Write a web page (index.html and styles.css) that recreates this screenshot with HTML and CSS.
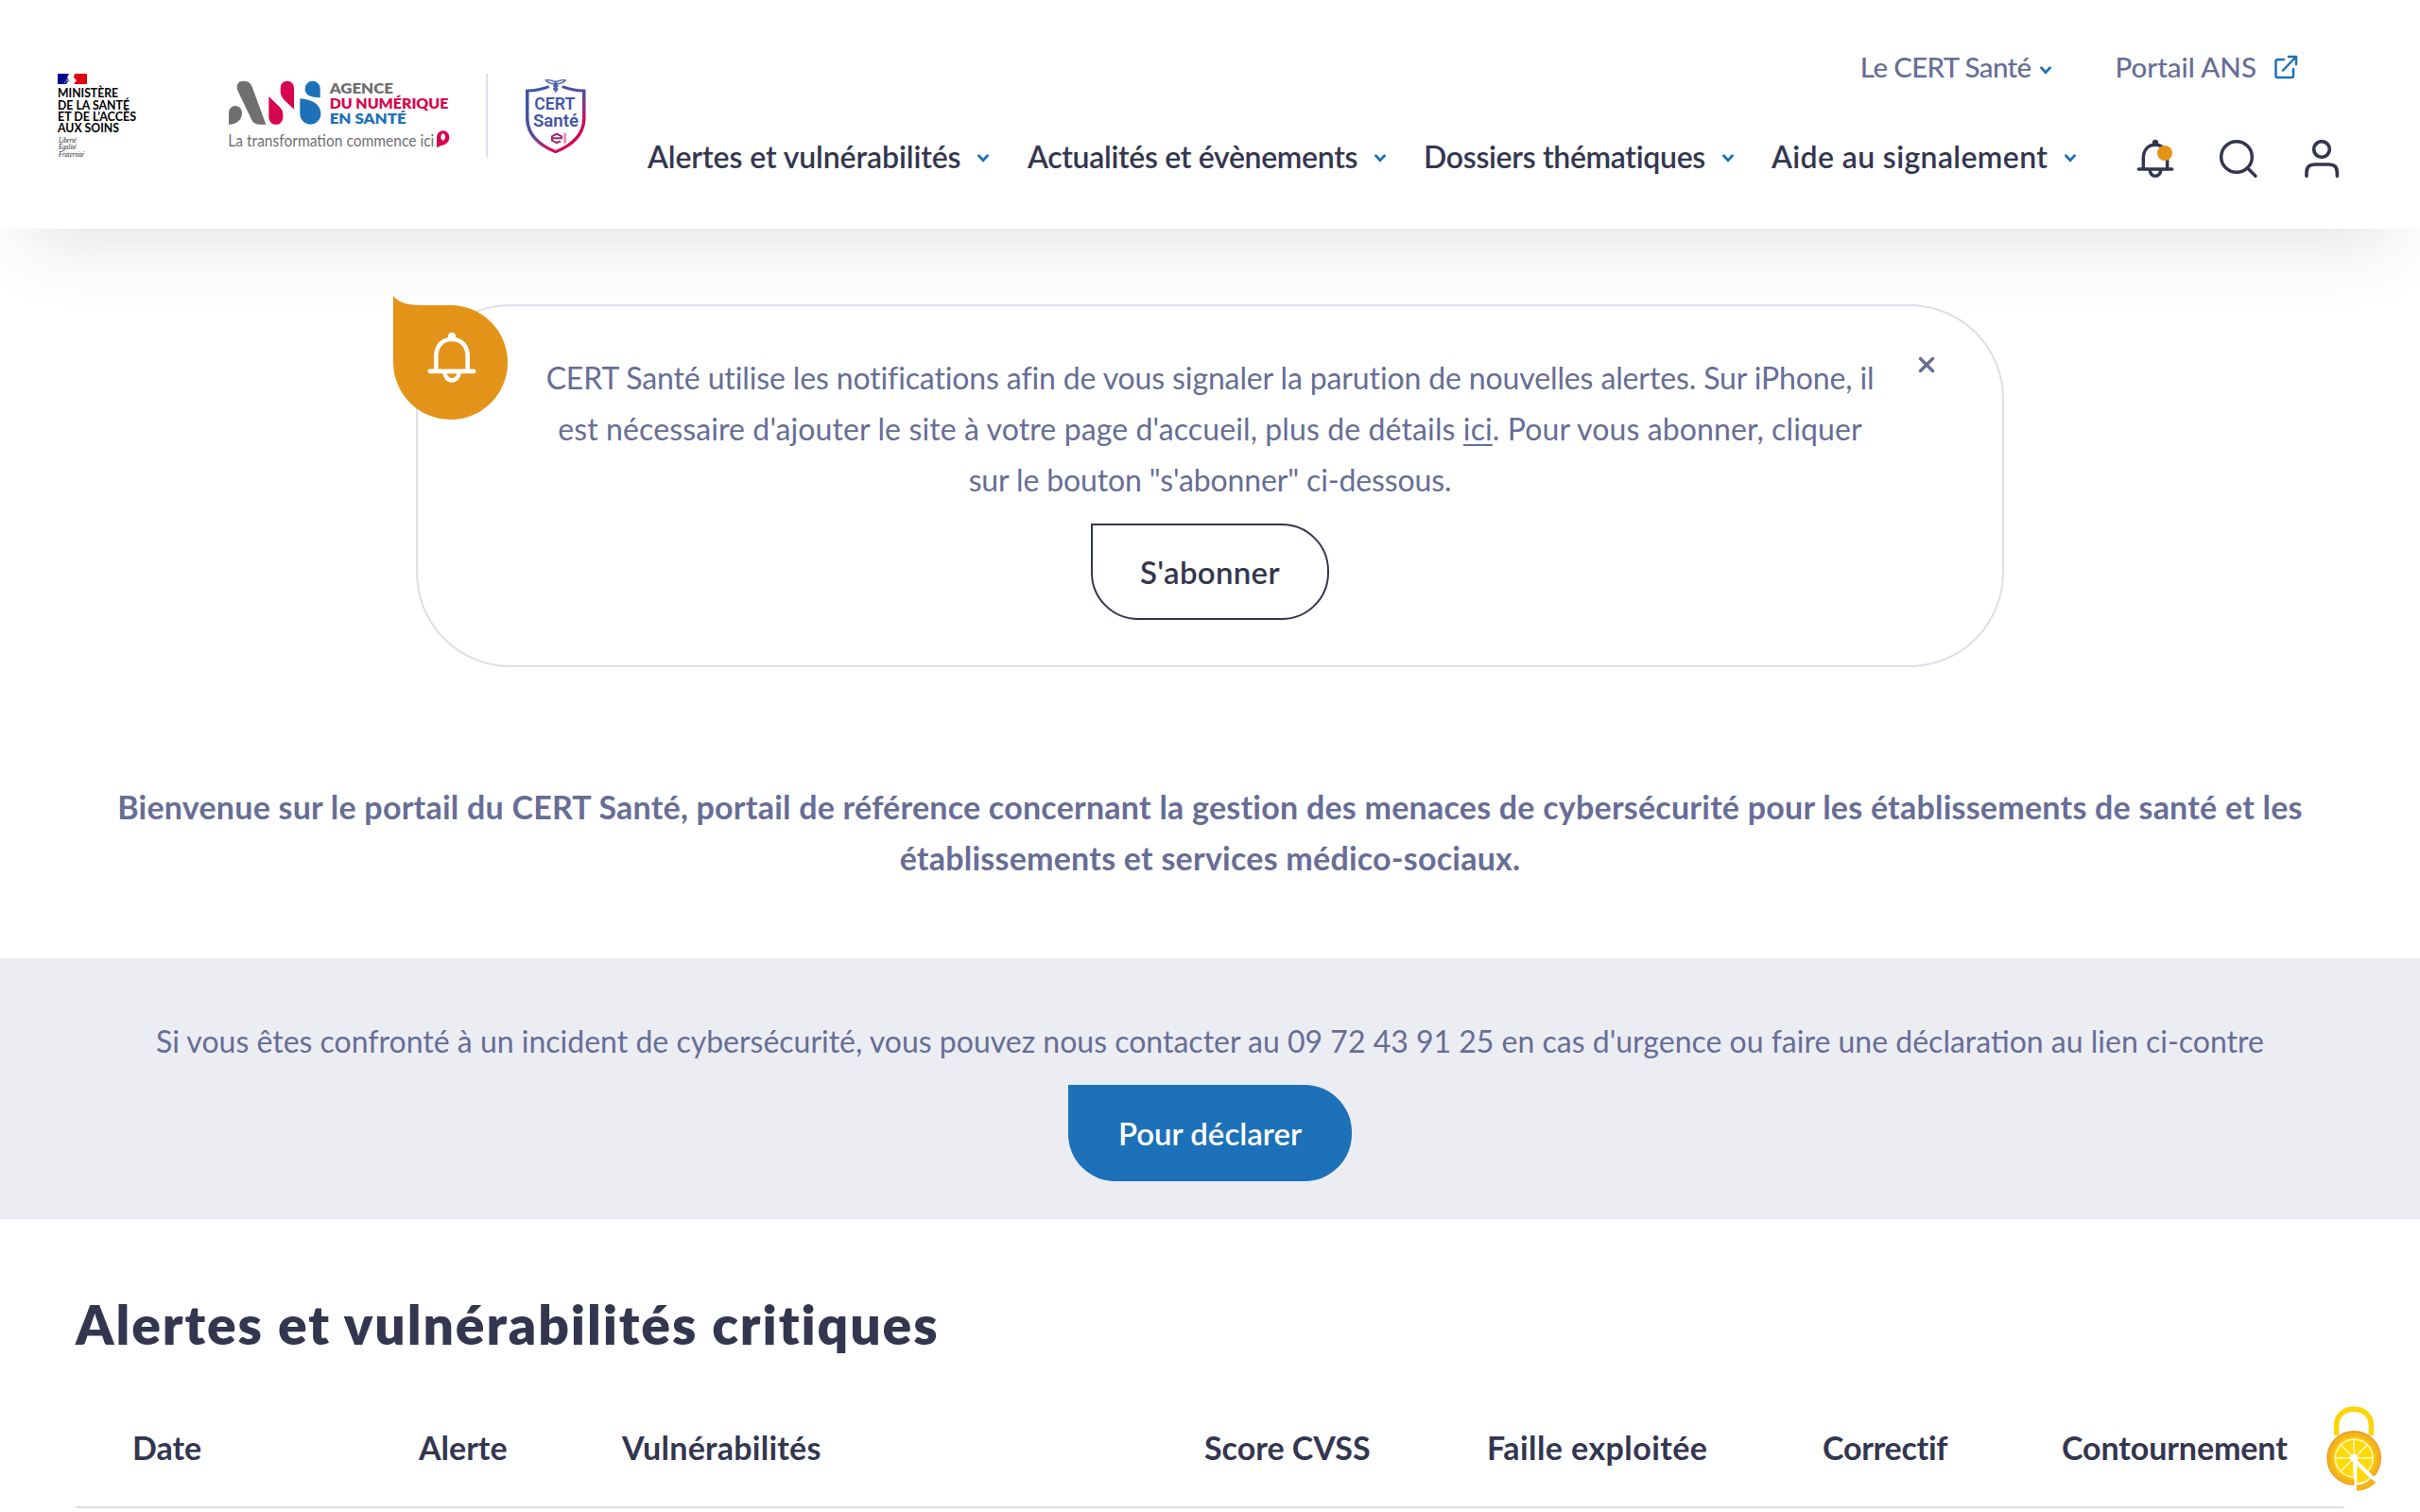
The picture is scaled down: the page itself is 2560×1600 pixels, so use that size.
FILE: index.html
```html
<!DOCTYPE html>
<html lang="fr">
<head>
<meta charset="utf-8">
<title>CERT Santé</title>
<link rel="stylesheet" href="styles.css">
</head>
<body>
<svg class="defs" aria-hidden="true">
  <symbol id="bell" viewBox="54 30 132 132">
    <g fill="none" stroke="currentColor" stroke-width="10.5" stroke-linecap="round" stroke-linejoin="round">
      <path d="M67 132H173M82 132V97C82 71 97 55 120 55S158 71 158 97V132M103 135A17 19 0 0 0 137 135"/>
    </g>
    <circle cx="120" cy="48" r="9.5" fill="currentColor"/>
  </symbol>
  <symbol id="chevron" viewBox="0 0 12 9">
    <path d="M1.5 1.8L6 6.6L10.5 1.8" fill="none" stroke="currentColor" stroke-width="2.8" stroke-linecap="round"/>
  </symbol>
</svg>

<header class="header">
  <div class="logos">
    <svg class="logo-ministry" viewBox="0 0 90 94">
      <path d="M1 2H13L11 6L13 9L10 13H1Z" fill="#000091"/>
      <path d="M19 2H32V13H18L21 9L18 6Z" fill="#e1000f"/>
      <path d="M8 12q3-4 5-3M10 8l4 2" fill="none" stroke="#aab" stroke-width="1"/>
      <g class="ministry-name">
        <text x="1" y="27" textLength="64" lengthAdjust="spacingAndGlyphs">MINISTÈRE</text>
        <text x="1" y="39.5" textLength="76" lengthAdjust="spacingAndGlyphs">DE LA SANTÉ</text>
        <text x="1" y="51.7" textLength="83" lengthAdjust="spacingAndGlyphs">ET DE L’ACCÈS</text>
        <text x="1" y="64" textLength="65" lengthAdjust="spacingAndGlyphs">AUX SOINS</text>
      </g>
      <g class="ministry-motto">
        <text x="2" y="74.5" textLength="19" lengthAdjust="spacingAndGlyphs">Liberté</text>
        <text x="2" y="82.3" textLength="19" lengthAdjust="spacingAndGlyphs">Égalité</text>
        <text x="2" y="90" textLength="27" lengthAdjust="spacingAndGlyphs">Fraternité</text>
      </g>
    </svg>
    <svg class="logo-ans" viewBox="30 40 720 240">
      <g fill="#706f6f">
        <path d="M36 186V148A21 21 0 0 1 78 148C78 172 62 186 36 186Z"/>
        <path d="M62 70Q62 48 85 48Q103 48 110 66L154 186H132Q115 186 108 170L66 82Q62 75 62 70Z"/>
      </g>
      <g fill="#d9044f">
        <path d="M163 97L199 132Q208 141 208 152V164A22.500 22.500 0 0 1 163 164Z"/>
        <path d="M243 138L212 108Q200 96 200 82V70A21.500 22 0 0 1 243 70Z"/>
      </g>
      <g fill="#1d71b8">
        <path d="M326 101C296 100 278 94 278 73A24 25 0 0 1 326 73Z"/>
        <path d="M262 104C300 106 328 122 328 152A33 34 0 0 1 262 152Z"/>
      </g>
      <g class="ans-name">
        <text x="356" y="88" textLength="202" lengthAdjust="spacingAndGlyphs" fill="#706f6f">AGENCE</text>
        <text x="356" y="136.500" textLength="377" lengthAdjust="spacingAndGlyphs" fill="#d9044f">DU NUMÉRIQUE</text>
        <text x="356" y="185" textLength="243" lengthAdjust="spacingAndGlyphs" fill="#1d71b8">EN SANTÉ</text>
      </g>
      <text class="ans-tagline" x="34" y="256" textLength="654" lengthAdjust="spacingAndGlyphs">La transformation commence ici</text>
      <path fill="#d9044f" fill-rule="evenodd" d="M696 260V226A20 20 0 0 1 736 226C736 244 724 250 708 254ZM716 215A7 11 0 1 0 716.100 215Z"/>
    </svg>
    <span class="logo-divider"></span>
    <svg class="logo-cert" viewBox="30 20 180 245" preserveAspectRatio="none">
      <defs>
        <linearGradient id="cert" gradientUnits="userSpaceOnUse" x1="60" y1="80" x2="180" y2="200">
          <stop offset="0" stop-color="#3b56a8"/>
          <stop offset=".5" stop-color="#5a4a98"/>
          <stop offset=".8" stop-color="#c31562"/>
          <stop offset="1" stop-color="#d9044f"/>
        </linearGradient>
      </defs>
      <path d="M100 50Q75 61 44 63V150Q47 214 117 247Q187 214 190 150V63Q159 61 134 50" fill="none" stroke="url(#cert)" stroke-width="8.500"/>
      <path d="M117 32V68M117 38Q106 28 92 31Q98 41 115 42M117 38Q128 28 142 31Q136 41 119 42M117 44q-10 5 0 9t0 10M117 44q10 5 0 9t0 10" fill="none" stroke="#4a5fa8" stroke-width="4"/>
      <g class="cert-name">
        <text x="62" y="121" textLength="105" lengthAdjust="spacingAndGlyphs">CERT</text>
        <text x="59" y="171" textLength="117" lengthAdjust="spacingAndGlyphs">Santé</text>
      </g>
      <path d="M109 206H132V200L120 193L108 200V213L120 220L130 215" fill="none" stroke="#a02a70" stroke-width="5.500"/>
      <path d="M141 190V221" stroke="#e391b4" stroke-width="7"/>
    </svg>
  </div>

  <div class="menus">
    <nav class="top-nav">
      <a class="top-link top-cert"><span>Le CERT Santé</span><svg class="chevron"><use href="#chevron"/></svg></a>
      <a class="top-link top-portal"><span>Portail ANS</span>
        <svg class="external" viewBox="0 0 26 26"><path d="M11 5H4.500Q2.500 5 2.500 7V22Q2.500 24 4.500 24H19Q21 24 21 22V15M10 16.500L23 3M16 2H24V10" fill="none" stroke="currentColor" stroke-width="2.500" stroke-linecap="round" stroke-linejoin="round"/></svg>
      </a>
    </nav>
    <nav class="main-nav">
      <a class="main-link nav-alerts"><span>Alertes et vulnérabilités</span><svg class="chevron"><use href="#chevron"/></svg></a>
      <a class="main-link nav-news"><span>Actualités et évènements</span><svg class="chevron"><use href="#chevron"/></svg></a>
      <a class="main-link nav-files"><span>Dossiers thématiques</span><svg class="chevron"><use href="#chevron"/></svg></a>
      <a class="main-link nav-help"><span>Aide au signalement</span><svg class="chevron"><use href="#chevron"/></svg></a>
      <div class="tools">
        <span class="tool"><svg class="tool-icon"><use href="#bell"/></svg><span class="dot"></span></span>
        <svg class="tool-icon" viewBox="318 30 132 132"><g fill="none" stroke="currentColor" stroke-width="10.500" stroke-linecap="round"><circle cx="378" cy="93" r="49"/><path d="M413 129L438 154"/></g></svg>
        <svg class="tool-icon" viewBox="582 30 132 132"><g fill="none" stroke="currentColor" stroke-width="11" stroke-linecap="round"><circle cx="648" cy="69" r="25"/><path d="M600 154V142Q600 117 625 117H672Q697 117 697 142V154"/></g></svg>
      </div>
    </nav>
  </div>
</header>

<main>
  <section class="notice">
    <svg class="notice-badge" viewBox="0 0 122 132"><path d="M0 0C5 7 15 10 30 10H61A60.500 60.500 0 1 1 0 70.500Z" fill="#e39317"/></svg>
    <svg class="notice-bell"><use href="#bell"/></svg>
    <p class="notice-text">CERT Santé utilise les notifications afin de vous signaler la parution de nouvelles alertes. Sur iPhone, il<br><span class="notice-line">est nécessaire d'ajouter le site à votre page d'accueil, plus de détails <a class="link">ici</a>. Pour vous abonner, cliquer</span><br>sur le bouton "s'abonner" ci-dessous.</p>
    <a class="button button-outline">S'abonner</a>
    <svg class="close" viewBox="0 0 18 18"><path d="M2.500 2.500L15.500 15.500M15.500 2.500L2.500 15.500" stroke="currentColor" stroke-width="3.400" stroke-linecap="round"/></svg>
  </section>

  <p class="welcome">Bienvenue sur le portail du CERT Santé, portail de référence concernant la gestion des menaces de cybersécurité pour les établissements de santé et les<br>établissements et services médico-sociaux.</p>

  <section class="incident">
    <p class="incident-text">Si vous êtes confronté à un incident de cybersécurité, vous pouvez nous contacter au 09 72 43 91 25 en cas d'urgence ou faire une déclaration au lien ci-contre</p>
    <a class="button button-primary">Pour déclarer</a>
  </section>

  <section class="alerts">
    <h2 class="alerts-title">Alertes et vulnérabilités critiques</h2>
    <div class="table-head">
      <span>Date</span>
      <span>Alerte</span>
      <span class="col-vuln">Vulnérabilités</span>
      <span>Score CVSS</span>
      <span class="col-exploit">Faille exploitée</span>
      <span class="col-fix">Correctif</span>
      <span class="col-bypass">Contournement</span>
    </div>
  </section>
</main>

<svg class="cookies" viewBox="120 80 184 276">
  <path d="M155 175V144C155 74 266 74 266 144V175" fill="none" stroke="#fbd50c" stroke-width="17"/>
  <circle cx="211" cy="248" r="85" fill="#f5b31a" stroke="#e89a2b" stroke-width="4"/>
  <circle cx="211" cy="248" r="70" fill="#f9c80e"/>
  <circle cx="211" cy="248" r="60" fill="#ffd90a" stroke="#fff6b8" stroke-width="5"/>
  <path d="M211 188V308M151 248H271M169 206L253 290M169 290L253 206" stroke="#fff6b8" stroke-width="5"/>
  <path d="M206 240L290 322L276 352L214 358Z" fill="#fff"/>
  <path d="M219 334Q246 334 264 314L281 325Q258 352 219 353Z" fill="#f5b31a"/>
  <path d="M220 270L262 312Q244 327 220 328Z" fill="#ffd90a" stroke="#fff6b8" stroke-width="2"/>
  <circle cx="211" cy="248" r="12" fill="#fff"/>
</svg>
</body>
</html>
```
FILE: styles.css
```css
* { box-sizing: border-box; }

body {
  margin: 0;
  height: 1600px;
  overflow: hidden;
  position: relative;
  background: #fff;
  color: #676d96;
  font: 400 32px/54px Lato, "Open Sans", sans-serif;
}

p, h2 { margin: 0; }
svg { display: block; flex: none; }
.defs { position: absolute; width: 0; height: 0; }

/* Header */
.header {
  display: flex;
  height: 242px;
  background: #fff;
  box-shadow: 0 40px 80px -30px rgba(50, 60, 80, .16);
  white-space: nowrap;
}
.logos {
  display: flex;
  align-items: flex-start;
  width: 685px;
  padding: 76px 0 0 60px;
}
.logo-ministry { width: 90px; height: 94px; }
.ministry-name { font: 700 12.500px Lato, sans-serif; fill: #000; }
.ministry-motto { font: italic 8px "Liberation Serif", serif; fill: #222; }
.logo-ans { width: 240px; height: 80px; margin: 7px 0 0 90px; }
.ans-name { font: 800 46px Lato, sans-serif; }
.ans-tagline { font: 400 49px Lato, sans-serif; fill: #706f6f; }
.logo-divider { width: 2px; height: 88px; margin: 2px 0 0 34px; background: #dddfe8; }
.logo-cert { width: 74px; height: 86px; margin: 5px 0 0 36px; }
.cert-name { font: 600 53px Roboto, sans-serif; fill: #4256a5; }

.menus { display: flex; flex-direction: column; flex: 1; }
.top-nav {
  display: flex;
  justify-content: flex-end;
  gap: 67px;
  padding: 44px 129px 0 0;
}
.top-link { display: flex; align-items: center; font-weight: 500; font-size: 29.500px; }
.top-cert { letter-spacing: -.650px; }
.top-cert .chevron { margin-left: 10px; }
.chevron { width: 12px; height: 9px; margin-top: 6px; color: #1d71b8; }
.external { width: 26px; height: 26px; margin-left: 18px; color: #1d71b8; }
.main-nav { display: flex; align-items: center; height: 54px; margin-top: 41px; }
.main-link { display: flex; align-items: center; color: #34364f; font-weight: 600; }
.main-link span { flex: 1; }
.main-link .chevron { margin-top: 2px; }
.nav-alerts { width: 361px; margin-right: 41px; letter-spacing: -.100px; }
.nav-news { width: 379px; margin-right: 40px; letter-spacing: -.330px; }
.nav-files { width: 328px; margin-right: 40px; letter-spacing: -.330px; }
.nav-help { width: 322px; letter-spacing: .370px; }
.tools { display: flex; gap: 44px; margin: 2px 0 0 62px; color: #34364f; }
.tool { position: relative; }
.tool-icon { width: 44px; height: 44px; }
.dot {
  position: absolute;
  left: 24px;
  top: 9px;
  width: 16px;
  height: 16px;
  border-radius: 50%;
  background: #e39317;
}

/* Notification card */
.notice {
  position: relative;
  display: flex;
  flex-direction: column;
  align-items: center;
  width: 1680px;
  height: 384px;
  margin: 80px auto 0;
  padding-top: 49px;
  border: 2px solid #dddfe8;
  border-radius: 100px;
  text-align: center;
}
.notice-text { letter-spacing: -.130px; white-space: nowrap; }
.notice-line { letter-spacing: .110px; }
.link { text-decoration: underline; text-decoration-thickness: 2px; text-underline-offset: 4px; }
.notice-badge { position: absolute; left: -26px; top: -11px; width: 122px; height: 132px; }
.notice-bell { position: absolute; left: 7px; top: 24px; width: 58px; height: 58px; color: #fff; }
.close { position: absolute; left: 1587px; top: 53px; width: 18px; height: 18px; color: #676d96; }

.button {
  display: flex;
  align-items: center;
  justify-content: center;
  height: 102px;
  margin-top: 19px;
  border-radius: 0 50px 50px 50px;
  font-weight: 600;
  font-size: 33px;
}
.button-outline { width: 252px; border: 2px solid #34364f; color: #34364f; letter-spacing: .300px; }
.button-primary { width: 300px; background: #1d71b8; color: #fff; }

.welcome {
  margin-top: 121px;
  text-align: center;
  font-weight: 700;
  font-size: 34px;
  letter-spacing: .230px;
  white-space: nowrap;
}

/* Incident band */
.incident {
  display: flex;
  flex-direction: column;
  align-items: center;
  height: 276px;
  margin-top: 79px;
  padding-top: 61px;
  background: #ecedf3;
}
.incident-text { white-space: nowrap; }

/* Critical alerts */
.alerts { padding: 76px 80px 0; color: #34364f; }
.alerts-title { font-weight: 800; font-size: 57px; line-height: 70px; letter-spacing: 1.900px; }
.table-head {
  display: grid;
  grid-template-columns: 303px 215px 616px 299px 355px 253px 1fr;
  height: 160px;
  padding: 69px 0 0 60px;
  border-bottom: 2px solid #dddfe8;
  font-weight: 700;
  font-size: 34px;
  white-space: nowrap;
}
.col-vuln { letter-spacing: .250px; }
.col-exploit { letter-spacing: .420px; }
.col-fix { letter-spacing: -.250px; }
.col-bypass { letter-spacing: -.100px; }

.cookies { position: absolute; left: 2460px; top: 1487px; width: 61px; height: 92px; }
```
